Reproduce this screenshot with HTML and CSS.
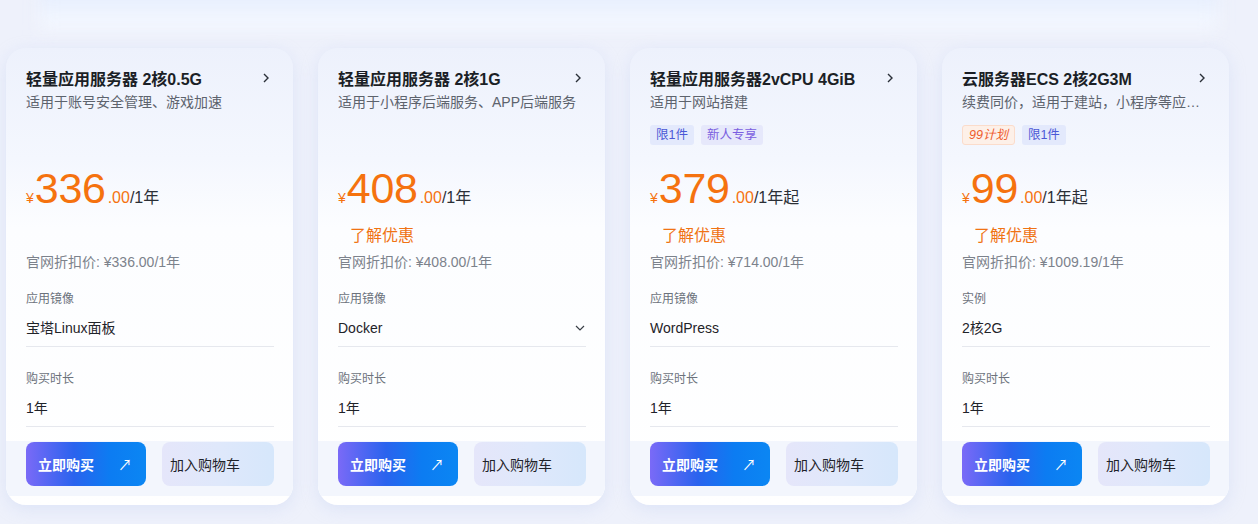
FILE: index.html
```html
<!DOCTYPE html>
<html lang="zh-CN">
<head>
<meta charset="utf-8">
<link rel="stylesheet" href="styles.css">
</head>
<body>
<div class="glow"></div>
<div class="cards">

  <div class="card">
    <div class="body">
      <div class="head"><span class="title">轻量应用服务器 2核0.5G</span><svg class="chev" viewBox="0 0 10 10"><path d="M3 1 L7 5 L3 9"/></svg></div>
      <div class="sub">适用于账号安全管理、游戏加速</div>
      <div class="tags"></div>
      <div class="price"><span class="yen">¥</span><span class="num">336</span><span class="dec">.00</span><span class="unit">/1年</span></div>
      <div class="promo empty">了解优惠</div>
      <div class="orig">官网折扣价: ¥336.00/1年</div>
      <div class="label first">应用镜像</div>
      <div class="value">宝塔Linux面板</div>
      <div class="label">购买时长</div>
      <div class="value">1年</div>
    </div>
    <div class="actions">
      <button class="buy">立即购买<span class="arr">↗</span></button>
      <button class="cart">加入购物车</button>
    </div>
  </div>

  <div class="card">
    <div class="body">
      <div class="head"><span class="title">轻量应用服务器 2核1G</span><svg class="chev" viewBox="0 0 10 10"><path d="M3 1 L7 5 L3 9"/></svg></div>
      <div class="sub">适用于小程序后端服务、APP后端服务</div>
      <div class="tags"></div>
      <div class="price"><span class="yen">¥</span><span class="num">408</span><span class="dec">.00</span><span class="unit">/1年</span></div>
      <div class="promo">了解优惠</div>
      <div class="orig">官网折扣价: ¥408.00/1年</div>
      <div class="label first">应用镜像</div>
      <div class="value select">Docker<svg class="down" viewBox="0 0 12 12"><path d="M2 4 L6 8 L10 4"/></svg></div>
      <div class="label">购买时长</div>
      <div class="value">1年</div>
    </div>
    <div class="actions">
      <button class="buy">立即购买<span class="arr">↗</span></button>
      <button class="cart">加入购物车</button>
    </div>
  </div>

  <div class="card">
    <div class="body">
      <div class="head"><span class="title">轻量应用服务器2vCPU 4GiB</span><svg class="chev" viewBox="0 0 10 10"><path d="M3 1 L7 5 L3 9"/></svg></div>
      <div class="sub">适用于网站搭建</div>
      <div class="tags"><span class="tag blue">限1件</span><span class="tag purple">新人专享</span></div>
      <div class="price"><span class="yen">¥</span><span class="num">379</span><span class="dec">.00</span><span class="unit">/1年起</span></div>
      <div class="promo">了解优惠</div>
      <div class="orig">官网折扣价: ¥714.00/1年</div>
      <div class="label first">应用镜像</div>
      <div class="value">WordPress</div>
      <div class="label">购买时长</div>
      <div class="value">1年</div>
    </div>
    <div class="actions">
      <button class="buy">立即购买<span class="arr">↗</span></button>
      <button class="cart">加入购物车</button>
    </div>
  </div>

  <div class="card">
    <div class="body">
      <div class="head"><span class="title">云服务器ECS 2核2G3M</span><svg class="chev" viewBox="0 0 10 10"><path d="M3 1 L7 5 L3 9"/></svg></div>
      <div class="sub">续费同价，适用于建站，小程序等应用场景</div>
      <div class="tags"><span class="tag orange">99计划</span><span class="tag blue">限1件</span></div>
      <div class="price"><span class="yen">¥</span><span class="num">99</span><span class="dec">.00</span><span class="unit">/1年起</span></div>
      <div class="promo">了解优惠</div>
      <div class="orig">官网折扣价: ¥1009.19/1年</div>
      <div class="label first">实例</div>
      <div class="value">2核2G</div>
      <div class="label">购买时长</div>
      <div class="value">1年</div>
    </div>
    <div class="actions">
      <button class="buy">立即购买<span class="arr">↗</span></button>
      <button class="cart">加入购物车</button>
    </div>
  </div>

</div>
</body>
</html>
```

FILE: styles.css
```css
* { box-sizing: border-box; }
html, body { margin: 0; padding: 0; }
body {
  width: 1258px;
  height: 524px;
  overflow: hidden;
  background: #eef1fb;
  font-family: "Liberation Sans", "Noto Sans CJK SC", sans-serif;
  color: #1f2329;
}
.glow {
  height: 42px;
  margin: -12px 40px 0;
  background: linear-gradient(180deg, #e2ebfd 0%, #eaf1fe 40%, #f4f8ff 85%, #f3f6fe 100%);
  filter: blur(8px);
}
.cards {
  display: flex;
  gap: 25px;
  padding: 18px 0 0 6px;
}
.card {
  width: 287px;
  height: 457px;
  border-radius: 20px;
  background: linear-gradient(180deg, #edf1fc 0px, #f4f7fe 110px, #fcfdff 180px, #ffffff 100%);
  box-shadow: 0 4px 16px rgba(190, 202, 240, 0.35);
  display: flex;
  flex-direction: column;
  overflow: hidden;
}
.body {
  padding: 18px 19px 0 20px;
}
.head {
  display: flex;
  align-items: center;
  justify-content: space-between;
  height: 24px;
}
.title {
  font-size: 16px;
  font-weight: 700;
  color: #1b1f26;
  white-space: nowrap;
}
.chev {
  width: 10px;
  height: 10px;
  margin-right: 3px;
  fill: none;
  stroke: #2a2f38;
  stroke-width: 1.4;
}
.sub {
  margin-top: 2px;
  height: 20px;
  line-height: 20px;
  font-size: 14px;
  color: #5d636d;
  white-space: nowrap;
  overflow: hidden;
  text-overflow: ellipsis;
}
.tags {
  margin-top: 13px;
  height: 20px;
  display: flex;
  gap: 7px;
}
.tag {
  height: 20px;
  line-height: 20px;
  padding: 0 6px;
  border-radius: 3px;
  font-size: 12.5px;
}
.tag.blue { background: #e3e9fc; color: #4b58d6; }
.tag.purple { background: #e6e8fb; color: #7b5fe0; }
.tag.orange {
  background: #fdf0e8;
  color: #ef5b2c;
  border: 1px solid #fbdccb;
  line-height: 18px;
  font-style: italic;
}
.price {
  margin-top: 17px;
  height: 52px;
  line-height: 52px;
  display: flex;
  align-items: baseline;
  white-space: nowrap;
}
.yen { font-size: 14px; color: #f5720f; margin-right: 1px; }
.num { font-size: 43px; color: #f5720f; letter-spacing: -0.3px; }
.dec { font-size: 16px; color: #f5720f; margin-left: 2px; }
.unit { font-size: 16px; color: #2b2f36; }
.promo {
  margin-top: 10px;
  height: 24px;
  line-height: 24px;
  padding-left: 12px;
  font-size: 16px;
  color: #f07314;
}
.promo.empty { visibility: hidden; }
.orig {
  margin-top: 4px;
  height: 20px;
  line-height: 20px;
  font-size: 14px;
  color: #7c828c;
}
.label {
  margin-top: 23px;
  height: 18px;
  line-height: 18px;
  font-size: 12px;
  color: #6c727c;
}
.label.first { margin-top: 18px; }
.value {
  margin-top: 10px;
  height: 29px;
  line-height: 20px;
  padding-bottom: 8px;
  border-bottom: 1px solid #e6e8ee;
  font-size: 14px;
  color: #1f2329;
  display: flex;
  justify-content: space-between;
  align-items: flex-start;
}
.down {
  width: 12px;
  height: 12px;
  margin-top: 4px;
  fill: none;
  stroke: #3a3f47;
  stroke-width: 1.2;
}
.actions {
  margin-top: 14px;
  padding: 1px 19px 10px 20px;
  background: #f3f6fd;
  display: flex;
  gap: 16px;
}
button {
  font-family: inherit;
  border: none;
  height: 44px;
  border-radius: 8px;
  font-size: 14px;
  cursor: pointer;
}
.buy {
  width: 120px;
  display: flex;
  align-items: center;
  justify-content: space-between;
  padding: 0 14px 0 12px;
  color: #ffffff;
  font-weight: 700;
  background: linear-gradient(90deg, #7a6af7 0%, #2a63ee 40%, #0c7cf2 70%, #0b86f3 100%);
}
.arr { font-weight: 400; font-size: 14px; }
.cart {
  width: 112px;
  text-align: left;
  padding: 0 8px;
  color: #1f2329;
  background: linear-gradient(90deg, #e5e6fa 0%, #dfe8fb 50%, #d6e7fb 100%);
}
```
